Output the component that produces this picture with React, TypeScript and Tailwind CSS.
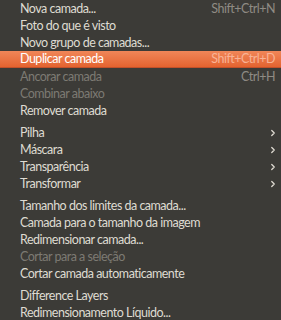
import { ChevronRight } from "lucide-react";

type Item =
  | { sep: true }
  | {
      sep?: false;
      label: string;
      shortcut?: string;
      disabled?: boolean;
      active?: boolean;
      sub?: boolean;
    };

const items: Item[] = [
  { label: "Nova camada...", shortcut: "Shift+Ctrl+N" },
  { label: "Foto do que é visto" },
  { label: "Novo grupo de camadas..." },
  { label: "Duplicar camada", shortcut: "Shift+Ctrl+D", active: true },
  { label: "Ancorar camada", shortcut: "Ctrl+H", disabled: true },
  { label: "Combinar abaixo", disabled: true },
  { label: "Remover camada" },
  { sep: true },
  { label: "Pilha", sub: true },
  { label: "Máscara", sub: true },
  { label: "Transparência", sub: true },
  { label: "Transformar", sub: true },
  { sep: true },
  { label: "Tamanho dos limites da camada..." },
  { label: "Camada para o tamanho da imagem" },
  { label: "Redimensionar camada..." },
  { label: "Cortar para a seleção", disabled: true },
  { label: "Cortar camada automaticamente" },
  { sep: true },
  { label: "Difference Layers" },
  { label: "Redimensionamento Líquido..." },
];

export default function App() {
  return (
    <div className="w-[281px] h-[320px] overflow-hidden bg-[#3c3b37] font-['Lato',sans-serif] text-[12.5px] tracking-[-0.5px]">
      {items.map((item, i) => {
        if (item.sep) return <div key={i} className="h-[5px]" />;

        const textColor = item.active
          ? "text-white"
          : item.disabled
          ? "text-[#7d7a73]"
          : "text-[#dfdbd2]";

        return (
          <div
            key={i}
            className={`flex items-center h-[17px] pl-5 ${item.sub ? "pr-[3px]" : "pr-[6px]"} ${
              item.active
                ? "bg-gradient-to-b from-[#f08658] to-[#e4632f] border-b border-[#c2502a]"
                : ""
            }`}
          >
            <span className={`flex-1 leading-none pt-[1px] ${textColor}`}>{item.label}</span>
            {item.shortcut && (
              <span
                className={`leading-none pt-[1px] ${
                  item.active ? "text-[#f8b396]" : "text-[#8f8b84]"
                }`}
              >
                {item.shortcut}
              </span>
            )}
            {item.sub && (
              <ChevronRight size={10} strokeWidth={3} className="text-[#dfdbd2]" />
            )}
          </div>
        );
      })}
    </div>
  );
}
